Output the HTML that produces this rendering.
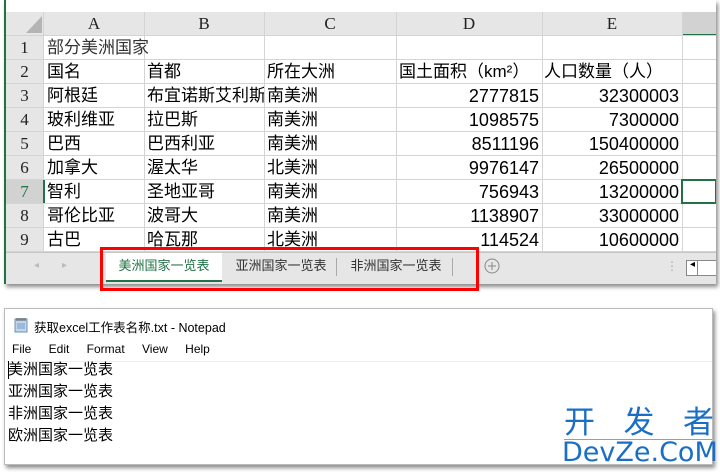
<!DOCTYPE html>
<html><head><meta charset="utf-8"><style>
body{margin:0;width:720px;height:475px;background:#fff;position:relative;overflow:hidden;font-family:"Liberation Sans","Noto Sans CJK SC",sans-serif}
.a{position:absolute}
.xl{left:4px;top:0;width:710px;height:284px;background:#fff;box-shadow:2px 3px 4px rgba(0,0,0,.45);border-left:2px solid #217346;overflow:hidden}
.h{position:absolute;background:#e6e6e6;font-family:"Liberation Serif",serif;font-size:17px;color:#222;text-align:center;line-height:24px}
.c{position:absolute;font-family:"Liberation Sans","Noto Sans CJK SC",sans-serif;font-size:17px;line-height:24px;white-space:nowrap;overflow:hidden;color:#000}
.n{text-align:right;font-size:18px}
.vl{position:absolute;top:12px;width:1px;height:240px;background:#d4d4d4}
.hl{position:absolute;left:0;width:710px;height:1px;background:#d4d4d4}
.np{left:4px;top:308px;width:709px;height:157px;background:#fff;box-shadow:2px 3px 4px rgba(0,0,0,.45);border:1px solid #bbb;box-sizing:border-box}
.t{font-family:"Liberation Sans","Noto Sans CJK SC",sans-serif;font-size:12px;color:#000;white-space:nowrap}
</style></head><body>
<div class="a xl">
 <div class="a" style="left:0;top:0;width:710px;height:12px;background:#fff"></div>
 <div class="h" style="left:0;top:12px;width:710px;height:24px"></div>
 <div class="h" style="left:0;top:36px;width:37px;height:216px;line-height:24px">
  <div>1</div><div>2</div><div>3</div><div>4</div><div>5</div><div>6</div><div style="background:#d2d2d2;color:#217346">7</div><div>8</div><div>9</div>
 </div>
 <svg class="a" style="left:20px;top:16px" width="16" height="18"><polygon points="16,0 16,17 0,17" fill="#b4b4b4"/></svg>
 <div class="h" style="left:38px;top:12px;width:100px">A</div>
 <div class="h" style="left:138px;top:12px;width:120px">B</div>
 <div class="h" style="left:258px;top:12px;width:132px">C</div>
 <div class="h" style="left:390px;top:12px;width:146px">D</div>
 <div class="h" style="left:536px;top:12px;width:140px">E</div>
 <div class="h" style="left:676px;top:12px;width:34px;background:#d2d2d2;border-bottom:2px solid #217346;height:22px"></div>
 <div class="vl" style="left:37px"></div><div class="vl" style="left:138px"></div><div class="vl" style="left:258px"></div><div class="vl" style="left:390px"></div><div class="vl" style="left:536px"></div><div class="vl" style="left:676px"></div>
 <div class="hl" style="top:35px"></div><div class="hl" style="top:59px"></div><div class="hl" style="top:83px"></div><div class="hl" style="top:107px"></div><div class="hl" style="top:131px"></div><div class="hl" style="top:155px"></div><div class="hl" style="top:179px"></div><div class="hl" style="top:203px"></div><div class="hl" style="top:227px"></div><div class="hl" style="top:251px"></div>
 <div class="a" style="left:37px;top:180px;width:2px;height:23px;background:#217346"></div>
 <div class="c" style="left:41px;top:36px;color:#333">部分美洲国家</div>
 <div class="c" style="left:41px;top:60px">国名</div><div class="c" style="left:141px;top:60px">首都</div><div class="c" style="left:261px;top:60px">所在大洲</div><div class="c" style="left:393px;top:60px">国土面积（km²）</div><div class="c" style="left:538px;top:60px">人口数量（人）</div>
 <div class="c" style="left:41px;top:84px">阿根廷</div><div class="c" style="left:141px;top:84px;width:117px">布宜诺斯艾利斯</div><div class="c" style="left:261px;top:84px">南美洲</div><div class="c n" style="left:390px;top:84px;width:143px">2777815</div><div class="c n" style="left:536px;top:84px;width:137px">32300003</div>
 <div class="c" style="left:41px;top:108px">玻利维亚</div><div class="c" style="left:141px;top:108px">拉巴斯</div><div class="c" style="left:261px;top:108px">南美洲</div><div class="c n" style="left:390px;top:108px;width:143px">1098575</div><div class="c n" style="left:536px;top:108px;width:137px">7300000</div>
 <div class="c" style="left:41px;top:132px">巴西</div><div class="c" style="left:141px;top:132px">巴西利亚</div><div class="c" style="left:261px;top:132px">南美洲</div><div class="c n" style="left:390px;top:132px;width:143px">8511196</div><div class="c n" style="left:536px;top:132px;width:137px">150400000</div>
 <div class="c" style="left:41px;top:156px">加拿大</div><div class="c" style="left:141px;top:156px">渥太华</div><div class="c" style="left:261px;top:156px">北美洲</div><div class="c n" style="left:390px;top:156px;width:143px">9976147</div><div class="c n" style="left:536px;top:156px;width:137px">26500000</div>
 <div class="c" style="left:41px;top:180px">智利</div><div class="c" style="left:141px;top:180px">圣地亚哥</div><div class="c" style="left:261px;top:180px">南美洲</div><div class="c n" style="left:390px;top:180px;width:143px">756943</div><div class="c n" style="left:536px;top:180px;width:137px">13200000</div>
 <div class="c" style="left:41px;top:204px">哥伦比亚</div><div class="c" style="left:141px;top:204px">波哥大</div><div class="c" style="left:261px;top:204px">南美洲</div><div class="c n" style="left:390px;top:204px;width:143px">1138907</div><div class="c n" style="left:536px;top:204px;width:137px">33000000</div>
 <div class="c" style="left:41px;top:228px">古巴</div><div class="c" style="left:141px;top:228px">哈瓦那</div><div class="c" style="left:261px;top:228px">北美洲</div><div class="c n" style="left:390px;top:228px;width:143px">114524</div><div class="c n" style="left:536px;top:228px;width:137px">10600000</div>
 <div class="a" style="left:675px;top:179px;width:32px;height:21px;border:2px solid #217346"></div>
 <div class="a" style="left:0;top:252px;width:710px;height:32px;background:#e6e6e6;border-top:1px solid #c6c6c6"></div>
 <div class="a" style="left:28px;top:260px;color:#bbb;font-size:10px">◂</div><div class="a" style="left:56px;top:260px;color:#bbb;font-size:10px">▸</div>
 <div class="a t" style="left:100px;top:253px;width:116px;height:27px;background:#fff;border-bottom:2px solid #217346;color:#217346;text-align:center;line-height:26px;font-size:13px">美洲国家一览表</div>
 <div class="a t" style="left:220px;top:253px;width:110px;height:27px;text-align:center;line-height:26px;color:#333;font-size:13px">亚洲国家一览表</div>
 <div class="a" style="left:330px;top:258px;width:1px;height:18px;background:#aaa"></div>
 <div class="a t" style="left:334px;top:253px;width:112px;height:27px;text-align:center;line-height:26px;color:#333;font-size:13px">非洲国家一览表</div>
 <div class="a" style="left:446px;top:258px;width:1px;height:18px;background:#aaa"></div>
 <svg class="a" style="left:478px;top:258px" width="16" height="16"><circle cx="8" cy="8" r="7" fill="none" stroke="#888"/><path d="M8 4v8M4 8h8" stroke="#888"/></svg>
 <div class="a" style="left:660px;top:259px;color:#aaa;font-size:12px">⋮</div>
 <div class="a" style="left:680px;top:260px;width:30px;height:14px;border:1px solid #888;background:#fff"></div>
 <div class="a" style="left:684px;top:259px;font-size:10px">◂</div>
 <div class="a" style="left:691px;top:261px;width:1px;height:14px;background:#888"></div>
</div>
<div class="a" style="left:100px;top:247px;width:373px;height:38px;border:3px solid #f00"></div>
<div class="a np">
 <svg class="a" style="left:9px;top:8px" width="14" height="16"><rect x="1" y="2" width="12" height="13" fill="#bfd8ee" stroke="#6b8fb0"/><path d="M3 1v3M5 1v3M7 1v3M9 1v3M11 1v3" stroke="#555"/><path d="M3 7h8M3 9h8M3 11h8" stroke="#7a9cbc"/></svg>
 <div class="a t" style="left:29px;top:8px;font-size:12.5px">获取excel工作表名称.txt - Notepad</div>
 <div class="a t" style="left:7px;top:33px;word-spacing:14px">File Edit Format View Help</div>
 <div class="a" style="left:0;top:52px;width:707px;height:1px;background:#eee"></div>
 <div class="a" style="left:3px;top:49px;font-family:'Noto Sans CJK SC',sans-serif;font-size:15px;line-height:22px;white-space:nowrap">美洲国家一览表<br>亚洲国家一览表<br>非洲国家一览表<br>欧洲国家一览表</div>
 <div class="a" style="left:3px;top:52px;width:1px;height:18px;background:#000"></div>
</div>
<div class="a" style="left:564px;top:403px;color:#1a6fc4;font-family:'Noto Sans CJK SC',sans-serif;font-size:31px;line-height:34px;white-space:nowrap;width:150px;display:flex;justify-content:space-between"><span>开</span><span>发</span><span>者</span></div>
<div class="a" style="left:564px;top:439px;width:148px;height:1px;background:#5ab0e8"></div>
<div class="a" style="left:562px;top:436px;color:#1a6fc4;font-family:'DejaVu Sans',sans-serif;font-size:27px;line-height:34px;white-space:nowrap">DevZe.CoM</div>
</body></html>
